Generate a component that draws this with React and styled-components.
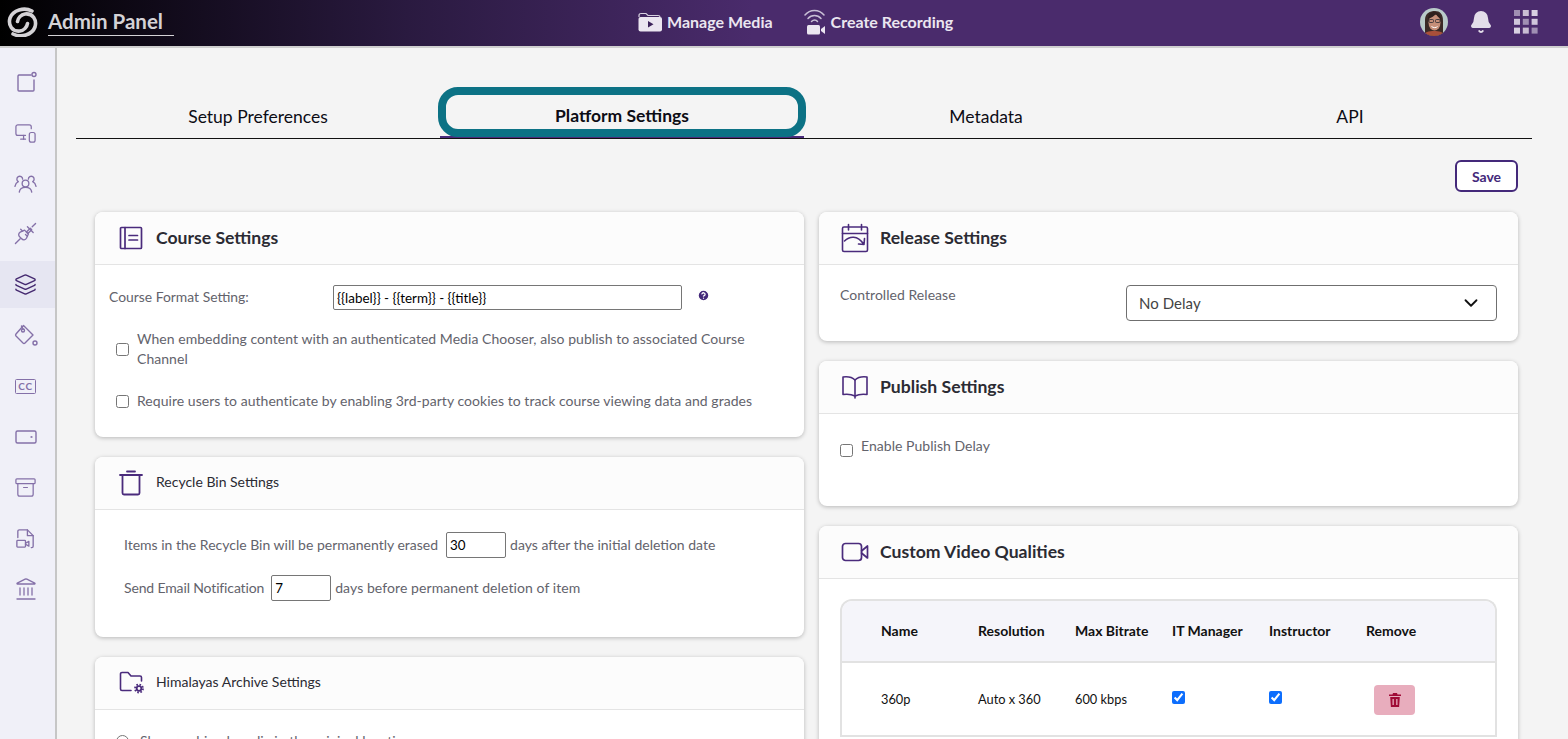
import React from 'react';
import styled, { createGlobalStyle } from 'styled-components';
import { Archive, Landmark, Layers, MonitorSmartphone, Bell, ChevronDown, CircleHelp } from 'lucide-react';

const Global = createGlobalStyle`
  * { box-sizing: border-box; }
  html, body { margin: 0; height: 100%; overflow: hidden; }
  body { font-family: Lato, "Noto Sans", sans-serif; background: #f4f4f4; color: #222; }
`;

const Page = styled.div`
  display: flex;
  flex-direction: column;
  height: 739px;
  overflow: hidden;
`;

const Header = styled.header`
  flex: 0 0 48px;
  display: flex;
  align-items: center;
  height: 48px;
  padding: 0 30px 2px 7px;
  background: linear-gradient(90deg, #000 0, #2a1a40 26%, #4a2b6c 48%, #4a2b6c 100%);
  border-bottom: 2px solid #cfcfcf;
`;

const Brand = styled.div`
  display: flex;
  align-items: center;
  gap: 10px;
  width: 631px;
`;

const BrandName = styled.span`
  display: block;
  width: 126px;
  margin-top: 1px;
  padding-bottom: 1px;
  font-size: 20.5px;
  font-weight: 700;
  line-height: 25px;
  color: #d4d2d6;
  border-bottom: 1px solid #d4d2d6;
`;

const Nav = styled.nav`
  display: flex;
  align-items: center;
  gap: 31px;
`;

const NavLink = styled.a`
  display: flex;
  align-items: center;
  gap: 5px;
  margin-top: -1px;
  font-size: 16px;
  font-weight: 700;
  color: #ebe6f0;
`;

const HeaderTools = styled.div`
  display: flex;
  align-items: center;
  gap: 21px;
  margin-left: auto;
`;

const Body = styled.div`
  flex: 1;
  display: flex;
  min-height: 0;
`;

const Sidebar = styled.aside`
  flex: 0 0 57px;
  display: flex;
  flex-direction: column;
  gap: 3.8px;
  padding-top: 10px;
  background: #f0f0f8;
  border-right: 2px solid #c6c6c6;
`;

const SideItem = styled.div`
  flex: 0 0 47px;
  display: flex;
  align-items: center;
  justify-content: center;
  padding-right: 4px;
  color: ${p => (p.$active ? '#452a70' : '#8470a8')};
  background: ${p => (p.$active ? '#e6e6f2' : 'transparent')};
`;

const CcBadge = styled.span`
  display: block;
  width: 21px;
  height: 15px;
  border: 1.3px solid currentColor;
  border-radius: 1.5px;
  font-size: 10px;
  font-weight: 700;
  line-height: 13px;
  letter-spacing: 0.6px;
  text-align: center;
`;

const Main = styled.main`
  flex: 1;
  min-width: 0;
  padding: 41px 36px 0 19px;
`;

const Tabs = styled.div`
  display: grid;
  grid-template-columns: repeat(4, 1fr);
  border-bottom: 1px solid #111;
  height: 50px;
`;

const Tab = styled.div`
  position: relative;
  display: flex;
  align-items: center;
  justify-content: center;
  height: 49px;
  padding-top: ${p => (p.$active ? 5 : 7)}px;
  font-size: 17.5px;
  font-weight: ${p => (p.$active ? 700 : 400)};
  color: #0c0c14;
  border-bottom: 2px solid ${p => (p.$active ? '#4a2b7c' : 'transparent')};
  &::after {
    content: ${p => (p.$active ? '""' : 'none')};
    position: absolute;
    inset: -2px -2px -1px;
    border: 8px solid #0c7285;
    border-radius: 20px;
  }
`;

const SaveRow = styled.div`
  display: flex;
  justify-content: flex-end;
  padding: 21px 14px 20px 0;
`;

const SaveButton = styled.button`
  width: 63px;
  height: 32px;
  padding: 0;
  font: 700 14px Lato, sans-serif;
  color: #44297a;
  background: #fff;
  border: 2px solid #44297a;
  border-radius: 6px;
`;

const Columns = styled.div`
  display: grid;
  grid-template-columns: 709px 699px;
  gap: 15px;
  padding-left: 19px;
  align-items: start;
`;

const Column = styled.div`
  display: flex;
  flex-direction: column;
  gap: 20px;
`;

const Card = styled.section`
  background: #fff;
  border-radius: 8px;
  box-shadow: 0 1px 4px rgba(0, 0, 0, 0.25);
  height: ${p => p.$h}px;
`;

const CardHeader = styled.div`
  display: flex;
  align-items: center;
  gap: ${p => p.$gap || 13}px;
  height: 53px;
  padding: 0 24px 0 ${p => p.$pad || 24}px;
  background: #fcfcfc;
  border-radius: 8px 8px 0 0;
  border-bottom: 1px solid #e4e4e4;
  color: #4a2b7c;
`;

const CardTitle = styled.h2`
  margin: ${p => (p.$small ? '-3px 0 0' : '-2px 0 0')};
  font-size: ${p => (p.$small ? 14 : 17.6)}px;
  font-weight: ${p => (p.$small ? 400 : 700)};
  color: #2b2b33;
`;

const CardBody = styled.div`
  padding: ${p => p.$pad || '0'};
  font-size: 14px;
  line-height: 20px;
  letter-spacing: 0.04px;
  color: #63636c;
`;

const FormatRow = styled.div`
  display: flex;
  align-items: center;
  height: 25px;
  margin-bottom: 19px;
`;

const FormatLabel = styled.label`
  flex: 0 0 224px;
  letter-spacing: 0;
  margin-top: -1px;
  font-size: 13.9px;
`;

const TextBox = styled.input`
  width: ${p => p.$w}px;
  height: ${p => p.$h || 26}px;
  margin: ${p => p.$m || '0'};
  padding: 0 3px;
  font: 13.4px Lato, sans-serif;
  color: #000;
  background: #fff;
  border: 1px solid #767676;
  border-radius: 2px;
`;

const HelpMark = styled.span`
  display: flex;
  margin: -5px 0 0 15px;
  color: #44297a;
`;

const CheckRow = styled.label`
  display: flex;
  align-items: ${p => (p.$top ? 'flex-start' : 'center')};
  gap: ${p => p.$gap ?? 8}px;
  padding-left: ${p => p.$left ?? 7}px;
  margin-bottom: ${p => p.$mb || 0}px;
  input { flex: none; margin: 0; width: 13px; height: 13px; }
`;

const InlineRow = styled.div`
  display: flex;
  align-items: center;
  height: 26px;
  margin-bottom: ${p => p.$mb || 0}px;
  letter-spacing: ${p => p.$spacing || 0}px;
  white-space: pre;
`;

const NarrowText = styled.span`
  letter-spacing: -0.14px;
`;

const ReleaseRow = styled.div`
  display: flex;
  align-items: flex-start;
  justify-content: space-between;
`;

const SelectBox = styled.div`
  display: flex;
  align-items: center;
  justify-content: space-between;
  width: 371px;
  height: 36px;
  padding: 0 14px 0 12px;
  font-size: 15px;
  color: #444;
  border: 1px solid #6f6f6f;
  border-radius: 4px;
  svg { color: #111; }
`;

const QualityTable = styled.div`
  margin: 20px 21px 0;
  border: 2px solid #e2e2e2;
  border-bottom: 0;
  border-radius: 12px 12px 0 0;
  overflow: hidden;
`;

const QualityRow = styled.div`
  display: grid;
  grid-template-columns: repeat(6, 97px);
  align-items: center;
  height: ${p => (p.$head ? 62 : 74)}px;
  padding: ${p => (p.$head ? '0 0 2px 39px' : '0 0 0 39px')};
  font-size: ${p => (p.$head ? 14 : 12.8)}px;
  font-weight: ${p => (p.$head ? 700 : 400)};
  color: #111;
  background: ${p => (p.$head ? '#f5f5fa' : '#fff')};
  border-bottom: 2px solid #e2e2e2;
  input { margin: 0 0 2px; width: 13px; height: 13px; accent-color: #0d6efd; }
`;

const RemoveButton = styled.button`
  display: flex;
  align-items: center;
  justify-content: center;
  width: 41px;
  height: 30px;
  margin: 2px 0 0 8px;
  padding: 0;
  color: #a00b36;
  background: #e8adbd;
  border: 0;
  border-radius: 4px;
`;

const Glyph = styled.svg`
  display: block;
  flex: none;
  fill: none;
  stroke: currentColor;
  stroke-width: ${p => p.$sw || 1.4};
  stroke-linecap: round;
  stroke-linejoin: round;
`;

const Logo = () => (
  <Glyph width="31" height="30" viewBox="0 0 31 30" $sw="3.6" style={{ color: '#d4d2d6' }}>
    <path d="M25 4C17 0 6 3 3 11 1 18 5 25 13 24c4-.5 7-4 7.500-7.500" />
    <path d="M6 27c8 4 19 1 22-7 2-7-2-14-10-13-4 .5-7 4-7.500 7.500" />
  </Glyph>
);

const FolderPlayIcon = () => (
  <svg width="24" height="20" viewBox="0 0 24 20">
    <path d="M1 5V3.500C1 2 2 1.500 3 1.500h5l2 2h10c1 0 2 .5 2 1.500" fill="none" stroke="#d8d2e0" strokeWidth="1.200" />
    <rect x="0.500" y="5" width="23.500" height="14.500" rx="2" fill="#ebe6f0" />
    <path d="M10 9l5.500 3.200L10 15.500z" fill="#3c2259" />
  </svg>
);

const RecordIcon = () => (
  <svg width="22" height="27" viewBox="0 0 22 27">
    <g fill="none" stroke="#c9c0d6" strokeWidth="1.500" strokeLinecap="round">
      <path d="M1 7C6 1 15 1 20 7" />
      <path d="M4 10.500c3.500-4 9.500-4 13 0" />
      <path d="M7.500 13.500c2-2 4.500-2 6 0" />
    </g>
    <rect x="3" y="17" width="13" height="9.500" rx="1.500" fill="#ebe6f0" />
    <path d="M17 21l4-3v8l-4-3z" fill="#ebe6f0" />
  </svg>
);

const Avatar = () => (
  <svg width="28" height="28" viewBox="0 0 28 28">
    <defs><clipPath id="face"><circle cx="14" cy="14" r="14" /></clipPath></defs>
    <g clipPath="url(#face)">
      <rect width="28" height="28" fill="#b9cbc9" />
      <path d="M5 28V12C5 5 10 3 15 3s8 3 8 10v15z" fill="#3a2a26" />
      <ellipse cx="14.500" cy="14.500" rx="6" ry="8" fill="#c58f79" />
      <path d="M8 11c3-1 6-3 8-5 1 2 3 4 5 5-1-5-3-7-7-7s-6 3-6 7z" fill="#2d201d" />
      <rect x="9" y="11.500" width="4.500" height="3" rx="1" fill="none" stroke="#2a2a30" strokeWidth=".8" />
      <rect x="15.500" y="11.500" width="4.500" height="3" rx="1" fill="none" stroke="#2a2a30" strokeWidth=".8" />
      <path d="M11.500 18.500c2 1.500 4.500 1.500 6 0" stroke="#fff" strokeWidth="1" fill="none" />
      <path d="M3 28c1-4 6-5 11-5s10 1 11 5z" fill="#a94f3a" />
    </g>
  </svg>
);

const AppsIcon = () => {
  const alpha = [.55, .8, .9, .85, .55, .85, .9, .8, .55];
  return (
    <svg width="24" height="24" viewBox="0 0 24 24">
      {alpha.map((a, i) => (
        <rect key={i} x={(i % 3) * 8.8} y={Math.floor(i / 3) * 8.8} width="6" height="6" fill="#e8e2ee" opacity={a} />
      ))}
    </svg>
  );
};

const sideIcons = [
  <Glyph width="24" height="24" viewBox="0 0 24 24"><path d="M17 5H5a1.500 1.500 0 0 0-1 1v14a1 1 0 0 0 1 1h14a1 1 0 0 0 1-1V10" /><circle cx="20" cy="4.500" r="2" /></Glyph>,
  <MonitorSmartphone size={23} strokeWidth={1.3} />,
  <Glyph width="23" height="23" viewBox="0 0 24 24"><circle cx="12" cy="12" r="3.500" /><path d="M5.500 21c.5-3.500 3-5 6.500-5s6 1.500 6.500 5" /><path d="M9 7.500a3 3 0 1 0-4.500 2.600C2.500 11 1.500 12.500 1 15" /><path d="M15 7.500a3 3 0 1 1 4.500 2.600c2 .9 3 2.400 3.500 4.900" /></Glyph>,
  <Glyph width="23" height="23" viewBox="0 0 24 24"><path d="M1.500 22.500l5-5" /><path d="M11 8.500l-4.500 2a3 3 0 0 0-.5 5l2 2a3 3 0 0 0 5-.5l2-4.500z" /><path d="M7 7.500l2 2M12 13l2 2" /><path d="M13 10.500l4-4 1.500 1.500-4 4z" /><path d="M14 5l6 6M19 5l3.500-3.500" /></Glyph>,
  <Layers size={23} strokeWidth={1.5} />,
  <Glyph width="24" height="24" viewBox="0 0 24 24"><path d="M9.500 2.500l9.500 9.500-8 8a1.500 1.500 0 0 1-2 0l-7-7a1.500 1.500 0 0 1 0-2z" /><circle cx="9" cy="7.500" r="1.500" /><path d="M7.500 3l1.500 3" /><circle cx="21" cy="20" r="2" /></Glyph>,
  <CcBadge>CC</CcBadge>,
  <Glyph width="24" height="24" viewBox="0 0 24 24"><rect x="2" y="6" width="20" height="12" rx="1.500" /><circle cx="17.500" cy="12" r=".4" /></Glyph>,
  <Archive size={23} strokeWidth={1.3} />,
  <Glyph width="23" height="23" viewBox="0 0 24 24"><path d="M4 11V4.500A1.500 1.500 0 0 1 5.500 3H14l6 6v11a1.500 1.500 0 0 1-1.500 1.500H18" /><path d="M14 3v6h6" /><rect x="3" y="14" width="9" height="7" rx=".8" /><path d="M12 17l3.500-2v5L12 18" /></Glyph>,
  <Landmark size={24} strokeWidth={1.3} />,
];

const NotebookIcon = () => (
  <Glyph width="24" height="24" viewBox="0 0 24 24" $sw="1.700"><rect x="1.500" y="1.500" width="21" height="21" rx="1" /><path d="M6 1.500v21M10 9.500h8.500M10 14h8.500" /></Glyph>
);
const TrashIcon = () => (
  <Glyph width="24" height="26" viewBox="0 0 24 26" $sw="1.800"><path d="M1 5h22M8 1.500h8" /><path d="M3.500 5v18a1.500 1.500 0 0 0 1.500 1.500h14a1.500 1.500 0 0 0 1.500-1.500V5" /></Glyph>
);
const FolderGearIcon = () => (
  <Glyph width="26" height="24" viewBox="0 0 26 24" $sw="1.600">
    <path d="M12 19.500H3a1.500 1.500 0 0 1-1.500-1.500V3A1.500 1.500 0 0 1 3 1.500h6l3 3.500h9a1.500 1.500 0 0 1 1.500 1.500V10" />
    <circle cx="20" cy="17.500" r="2.300" strokeWidth="1.800" />
    <circle cx="20" cy="17.500" r="4" strokeWidth="1.800" strokeDasharray="1.600 1.540" strokeLinecap="butt" />
  </Glyph>
);
const CalendarIcon = () => (
  <Glyph width="28" height="30" viewBox="0 0 28 30" $sw="1.600">
    <rect x="1.500" y="4" width="25" height="24.500" rx="1.500" />
    <path d="M1.500 10.500h25M7.500 1.500V7M20.500 1.500V7" />
    <path d="M3.500 18c5-5 13-6 19 3M23.500 15.500l-.5 6-5.500-.5" />
  </Glyph>
);
const BookIcon = () => (
  <Glyph width="28" height="24" viewBox="0 0 28 24" $sw="1.600">
    <path d="M14 5C11 2 6 1.500 2 2v17.500c4-.5 9 0 12 1.500 3-1.500 8-2 12-1.500V2c-4-.5-9 0-12 3z" />
    <path d="M14 5v18" />
  </Glyph>
);
const CameraIcon = () => (
  <Glyph width="28" height="20" viewBox="0 0 28 20" $sw="1.700">
    <rect x="1.500" y="1.500" width="19" height="17" rx="3" />
    <path d="M20.500 9l6-5v12l-6-5" />
  </Glyph>
);
const SolidTrash = () => (
  <svg width="12" height="14" viewBox="0 0 12 14" fill="currentColor">
    <path d="M4 0h4l.5 1.500H12V3H0V1.500h3.500z" />
    <path d="M1.200 4h9.600l-.7 10H1.900zM3.500 6v6h1.300V6zm3.700 0v6h1.300V6z" fillRule="evenodd" />
  </svg>
);

const rows = [['360p', 'Auto x 360', '600 kbps']];

export default function App() {
  return (
    <Page>
      <Global />
      <Header>
        <Brand>
          <Logo />
          <BrandName>Admin Panel</BrandName>
        </Brand>
        <Nav>
          <NavLink><FolderPlayIcon />Manage Media</NavLink>
          <NavLink><RecordIcon />Create Recording</NavLink>
        </Nav>
        <HeaderTools>
          <Avatar />
          <Bell size={24} fill="#e3dde9" color="#e3dde9" />
          <AppsIcon />
        </HeaderTools>
      </Header>
      <Body>
        <Sidebar>
          {sideIcons.map((icon, i) => (
            <SideItem key={i} $active={i === 4}>{icon}</SideItem>
          ))}
        </Sidebar>
        <Main>
          <Tabs>
            <Tab>Setup Preferences</Tab>
            <Tab $active>Platform Settings</Tab>
            <Tab>Metadata</Tab>
            <Tab>API</Tab>
          </Tabs>
          <SaveRow><SaveButton>Save</SaveButton></SaveRow>
          <Columns>
            <Column>
              <Card $h={225}>
                <CardHeader><NotebookIcon /><CardTitle>Course Settings</CardTitle></CardHeader>
                <CardBody $pad="20px 20px 0 14px">
                  <FormatRow>
                    <FormatLabel>Course Format Setting:</FormatLabel>
                    <TextBox $w={349} $h={25} defaultValue="{{label}} - {{term}} - {{title}}" />
                    <HelpMark><CircleHelp size={13} fill="#44297a" color="#fff" strokeWidth={2.4} /></HelpMark>
                  </FormatRow>
                  <CheckRow $mb={22}>
                    <input type="checkbox" />
                    <span>When embedding content with an authenticated Media Chooser, also publish to associated Course Channel</span>
                  </CheckRow>
                  <CheckRow>
                    <input type="checkbox" />
                    <span>Require users to authenticate by enabling 3rd-party cookies to track course viewing data and grades</span>
                  </CheckRow>
                </CardBody>
              </Card>
              <Card $h={180}>
                <CardHeader><TrashIcon /><CardTitle $small>Recycle Bin Settings</CardTitle></CardHeader>
                <CardBody $pad="22px 20px 0 29px">
                  <InlineRow $mb={17}>
                    Items in the Recycle Bin will be permanently erased
                    <TextBox $w={60} $m="0 4px 0 8px" defaultValue="30" />
                    days after the initial deletion date
                  </InlineRow>
                  <InlineRow $spacing={0.08}>
                    <NarrowText>Send Email Notification</NarrowText>
                    <TextBox $w={60} $m="0 4px 0 7px" defaultValue="7" />
                    days before permanent deletion of item
                  </InlineRow>
                </CardBody>
              </Card>
              <Card $h={180}>
                <CardHeader $gap={11}><FolderGearIcon /><CardTitle $small>Himalayas Archive Settings</CardTitle></CardHeader>
                <CardBody $pad="21px 20px 0 14px">
                  <CheckRow $gap={11}>
                    <input type="radio" name="archive" />
                    <span>Show archived media in the original location</span>
                  </CheckRow>
                </CardBody>
              </Card>
            </Column>
            <Column>
              <Card $h={129}>
                <CardHeader $pad={22} $gap={11}><CalendarIcon /><CardTitle>Release Settings</CardTitle></CardHeader>
                <CardBody $pad="20px 21px 0 21px">
                  <ReleaseRow>
                    <span>Controlled Release</span>
                    <SelectBox>No Delay<ChevronDown size={22} strokeWidth={2} /></SelectBox>
                  </ReleaseRow>
                </CardBody>
              </Card>
              <Card $h={145}>
                <CardHeader $pad={22} $gap={11}><BookIcon /><CardTitle>Publish Settings</CardTitle></CardHeader>
                <CardBody $pad="22px 21px 0 21px">
                  <CheckRow $left={0} $top>
                    <input type="checkbox" style={{ marginTop: 8 }} />
                    <span>Enable Publish Delay</span>
                  </CheckRow>
                </CardBody>
              </Card>
              <Card $h={320}>
                <CardHeader $pad={22} $gap={11}><CameraIcon /><CardTitle>Custom Video Qualities</CardTitle></CardHeader>
                <QualityTable>
                  <QualityRow $head>
                    <span>Name</span><span>Resolution</span><span>Max Bitrate</span>
                    <span>IT Manager</span><span>Instructor</span><span>Remove</span>
                  </QualityRow>
                  {rows.map(r => (
                    <QualityRow key={r[0]}>
                      {r.map(c => <span key={c}>{c}</span>)}
                      <span><input type="checkbox" defaultChecked /></span>
                      <span><input type="checkbox" defaultChecked /></span>
                      <RemoveButton><SolidTrash /></RemoveButton>
                    </QualityRow>
                  ))}
                </QualityTable>
              </Card>
            </Column>
          </Columns>
        </Main>
      </Body>
    </Page>
  );
}
